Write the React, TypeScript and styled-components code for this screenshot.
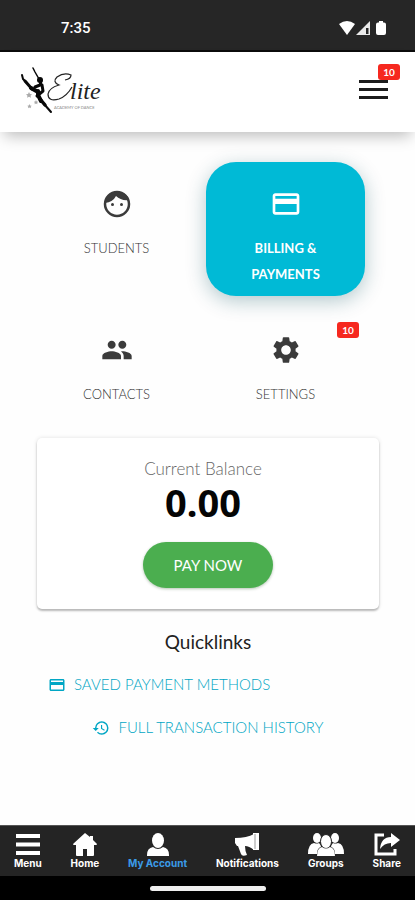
import React from "react";
import styled, { createGlobalStyle } from "styled-components";
import { MdCreditCard, MdPeople, MdSettings, MdHistory } from "react-icons/md";

const GlobalStyle = createGlobalStyle`
  *, *::before, *::after { box-sizing: border-box; }
  body { margin: 0; background: #fefefe; font-family: Lato, "Open Sans", sans-serif; color: #222; }
  button { font: inherit; color: inherit; border: 0; background: none; padding: 0; cursor: pointer; }
  a { color: inherit; text-decoration: none; }
  svg { display: block; }
`;

const Screen = styled.div`
  min-height: 100vh;
  display: flex;
  flex-direction: column;
`;

const StatusBar = styled.div`
  height: 52px;
  padding: 5px 28px 0 61px;
  display: flex;
  align-items: center;
  justify-content: space-between;
  background: #262626;
  border-bottom: 2px solid #0c0c0c;
  color: #fff;
  font: 500 15px/20px Roboto, sans-serif;
`;

const Header = styled.header`
  height: 80px;
  padding: 0 27px 0 20px;
  display: flex;
  align-items: center;
  justify-content: space-between;
  background: #fff;
  box-shadow: 0 8px 14px -4px rgba(0, 0, 0, 0.26);
`;

const MenuButton = styled.button`
  position: relative;
  padding-bottom: 4px;
`;

const Badge = styled.span<{ $top: number; $right: number }>`
  position: absolute;
  top: ${(p) => p.$top}px;
  right: ${(p) => p.$right}px;
  width: 22px;
  height: 16px;
  border-radius: 3px;
  background: #f6281f;
  color: #fff;
  font: 700 10px/16px Lato, sans-serif;
  text-align: center;
`;

const Main = styled.main`
  flex: 1;
  padding: 30px 36px 24px 37px;
  display: flex;
  flex-direction: column;
`;

const Tiles = styled.div`
  display: grid;
  grid-template-columns: 1fr 1fr;
  column-gap: 10px;
  row-gap: 12px;
  margin-right: 14px;
`;

const Tile = styled.button<{ $active?: boolean }>`
  position: relative;
  display: flex;
  flex-direction: column;
  align-items: center;
  gap: 15px;
  padding: 26px 36px 9px;
  border-radius: 30px;
  font-size: 13px;
  line-height: 26px;
  color: ${(p) => (p.$active ? "#fff" : "#333")};
  font-weight: ${(p) => (p.$active ? 700 : 300)};
  background: ${(p) => (p.$active ? "#00bad6" : "transparent")};
  box-shadow: ${(p) => (p.$active ? "0 5px 20px rgba(0, 75, 90, 0.3)" : "none")};
  svg { color: ${(p) => (p.$active ? "#fff" : "#3b3b3b")}; }
`;

const Card = styled.section`
  margin-top: 22px;
  padding: 20px 10px 21px 0;
  display: flex;
  flex-direction: column;
  align-items: center;
  border-radius: 5px;
  background: #fff;
  box-shadow: 0 2px 2px rgba(0, 0, 0, 0.24), 0 0 4px rgba(0, 0, 0, 0.12);
`;

const BalanceLabel = styled.div`
  font-size: 17px;
  line-height: 22px;
  font-weight: 300;
  color: #666;
`;

const Balance = styled.div`
  font: 700 38px/44px "Noto Sans", sans-serif;
  color: #050505;
`;

const PayButton = styled.button`
  width: 130px;
  height: 46px;
  margin: 18px 0 0 10px;
  border-radius: 23px;
  background: #4bae4f;
  color: #fff;
  font-size: 15px;
  box-shadow: 0 1px 3px rgba(0, 60, 0, 0.3);
`;

const LinksTitle = styled.h2`
  margin: 21px 0 0;
  text-align: center;
  font-size: 19px;
  line-height: 24px;
  font-weight: 400;
`;

const QuickLink = styled.a<{ $centered?: boolean }>`
  display: flex;
  align-items: center;
  align-self: ${(p) => (p.$centered ? "center" : "flex-start")};
  gap: 8px;
  margin: 18px 0 0 ${(p) => (p.$centered ? 0 : 11)}px;
  color: #00a6c4;
  font-size: 15px;
  line-height: 25px;
  font-weight: 300;
`;

const TabBar = styled.nav`
  height: 51px;
  padding: 7px 14px 0;
  display: flex;
  justify-content: space-between;
  background: #242424;
  border-top: 1px solid #555;
`;

const Tab = styled.a<{ $active?: boolean }>`
  display: flex;
  flex-direction: column;
  align-items: center;
  gap: 1px;
  font: 700 10px/12px Inter, "Liberation Sans", sans-serif;
  color: ${(p) => (p.$active ? "#3b9be8" : "#fff")};
  svg { fill: #fff; }
`;

const GestureBar = styled.div`
  height: 24px;
  display: flex;
  justify-content: center;
  align-items: center;
  background: #000;
`;

const GestureHandle = styled.div`
  width: 116px;
  height: 5px;
  border-radius: 3px;
  background: #eee;
`;

const StatusIcons = () => (
  <svg width="48" height="16" viewBox="0 0 48 16" fill="#fff" aria-hidden="true">
    <path d="M0 4Q8-2 16 4L8 15Z" />
    <path d="M31 1V15H17Z" opacity=".9" />
    <path d="M27 8h2.500v6H27z" fill="#262626" />
    <path d="M40 1h4v1.500h1q2 0 2 2V13q0 2-2 2h-6q-2 0-2-2V4.500q0-2 2-2h1z" />
  </svg>
);

const Logo = () => (
  <svg width="82" height="50" viewBox="0 0 82 50" role="img" aria-label="Elite Academy of Dance">
    <g fill="none" stroke="#080808" strokeLinecap="round" strokeLinejoin="round">
      <path d="M2 8l1 4 4 4" strokeWidth="2" />
      <path d="M5 14l7 8" strokeWidth="3" />
      <path d="M11 21l7 4" strokeWidth="4" />
      <path d="M13 1l2 4 4 7" strokeWidth="1.500" />
      <path d="M21 14l-1 4-5 2M22 18l1 6-6 5" strokeWidth="3" />
      <path d="M18 24l0 4 3 6" strokeWidth="4" />
      <path d="M20 32l5 6" strokeWidth="3.500" />
      <path d="M24 37l7 8" strokeWidth="2" />
    </g>
    <circle cx="20" cy="13" r="3" fill="#080808" />
    <g fill="#aaa">
      <path d="M9 25l1 2 2 .3-1.500 1.500.5 2-2-1-2 1 .5-2L6 27.300l2-.3z" />
      <path d="M16 33l.7 1.500 1.500.2-1 1 .2 1.500-1.400-.7-1.400.7.2-1.500-1-1 1.500-.2z" />
      <path d="M9.500 37l.7 1.500 1.500.2-1 1 .2 1.500-1.400-.7-1.400.7.2-1.500-1-1 1.500-.2z" />
    </g>
    <path d="M45 13q6-1 6-5-7-3-14 2-5 5 2 8-10 3-11 9 0 8 11 5 8-3 13-12" fill="none" stroke="#222" strokeWidth="1.200" />
    <text x="50" y="32" fontFamily="Liberation Serif, serif" fontStyle="italic" fontSize="24" fill="#222">lite</text>
    <text x="34" y="42" fontFamily="Lato, sans-serif" fontSize="4" fill="#888">ACADEMY OF DANCE</text>
  </svg>
);

const FaceIcon = () => (
  <svg width="32" height="32" viewBox="0 0 32 32" fill="currentColor" aria-hidden="true">
    <circle cx="16" cy="16" r="12" fill="none" stroke="currentColor" strokeWidth="2.500" />
    <path d="M4 15Q5 4 16 4q10 0 12 8-8 1-13-4-3 6-11 7z" />
    <circle cx="11.500" cy="16.500" r="1.500" />
    <circle cx="20.500" cy="16.500" r="1.500" />
  </svg>
);

const MenuIcon = () => (
  <svg width="26" height="23" viewBox="0 0 26 23" aria-hidden="true">
    <path d="M1 1h24v4H1zM1 9.500h24v4H1zM1 18h24v4H1z" />
  </svg>
);

const HomeIcon = () => (
  <svg width="24" height="23" viewBox="0 0 24 23" aria-hidden="true">
    <path d="M12 0L0 11q0 1 1 1h2v10q0 1 1 1h6v-7h4v7h6q1 0 1-1V12h2q1 0 1-1l-4-4V3h-3v1z" />
  </svg>
);

const AccountIcon = () => (
  <svg width="24" height="23" viewBox="0 0 24 23" aria-hidden="true">
    <ellipse cx="12" cy="7.500" rx="6" ry="7.500" />
    <path d="M7 14q5 4 10 0 6 1 6 8v1H1v-1q0-7 6-8z" />
  </svg>
);

const MegaphoneIcon = () => (
  <svg width="24" height="23" viewBox="0 0 24 23" aria-hidden="true">
    <path d="M0 5q12 0 19-4v16q-5-4-9-4 0 5 2 9-5 2-6-1L3 13H2l-2-3z" />
    <path d="M18 0h6v17h-6z" />
    <path d="M20 1v15" stroke="#999" />
  </svg>
);

const GroupIcon = () => (
  <svg width="36" height="23" viewBox="0 0 36 23" aria-hidden="true">
    <ellipse cx="9" cy="5" rx="4" ry="5" />
    <ellipse cx="27" cy="5" rx="4" ry="5" />
    <path d="M6 10q3 1 5 0 2 2 2 4-4 1-4 7H0q0-10 6-11zM30 10q-3 1-5 0-2 2-2 4 4 1 4 7h9q0-10-6-11z" />
    <ellipse cx="18" cy="8.500" rx="5.500" ry="7" stroke="#242424" />
    <path d="M14 14q4 3 8 0 5 1 5 9H9q0-8 5-9z" />
  </svg>
);

const ShareIcon = () => (
  <svg width="26" height="23" viewBox="0 0 26 23" aria-hidden="true">
    <path d="M10 2H2v19h19v-5" fillOpacity="0" stroke="#fff" strokeWidth="3" />
    <path d="M17 0l9 7-9 7v-4q-7 0-11 6 1-12 11-12z" />
  </svg>
);

const tabs = [
  { label: "Menu", Icon: MenuIcon },
  { label: "Home", Icon: HomeIcon },
  { label: "My Account", Icon: AccountIcon, active: true },
  { label: "Notifications", Icon: MegaphoneIcon },
  { label: "Groups", Icon: GroupIcon },
  { label: "Share", Icon: ShareIcon },
];

export default function App() {
  return (
    <>
      <GlobalStyle />
      <Screen>
        <StatusBar>
          <span>7:35</span>
          <StatusIcons />
        </StatusBar>
        <Header>
          <Logo />
          <MenuButton aria-label="Open menu, 10 notifications">
            <svg width="29" height="20" viewBox="0 0 29 20" fill="#1c1c1c" aria-hidden="true">
              <path d="M0 0h29v3H0zM0 8h29v3H0zM0 16h29v3H0z" />
            </svg>
            <Badge $top={-16} $right={-12}>10</Badge>
          </MenuButton>
        </Header>
        <Main>
          <Tiles>
            <Tile>
              <FaceIcon />
              STUDENTS
            </Tile>
            <Tile $active>
              <MdCreditCard size={32} />
              BILLING &amp; PAYMENTS
            </Tile>
            <Tile>
              <MdPeople size={32} />
              CONTACTS
            </Tile>
            <Tile>
              <MdSettings size={32} />
              SETTINGS
              <Badge $top={14} $right={6}>10</Badge>
            </Tile>
          </Tiles>
          <Card>
            <BalanceLabel>Current Balance</BalanceLabel>
            <Balance>0.00</Balance>
            <PayButton>PAY NOW</PayButton>
          </Card>
          <LinksTitle>Quicklinks</LinksTitle>
          <QuickLink href="#methods">
            <MdCreditCard size={18} />
            SAVED PAYMENT METHODS
          </QuickLink>
          <QuickLink href="#history" $centered>
            <MdHistory size={18} />
            FULL TRANSACTION HISTORY
          </QuickLink>
        </Main>
        <TabBar>
          {tabs.map(({ label, Icon, active }) => (
            <Tab key={label} href="#" $active={active}>
              <Icon />
              {label}
            </Tab>
          ))}
        </TabBar>
        <GestureBar>
          <GestureHandle />
        </GestureBar>
      </Screen>
    </>
  );
}
